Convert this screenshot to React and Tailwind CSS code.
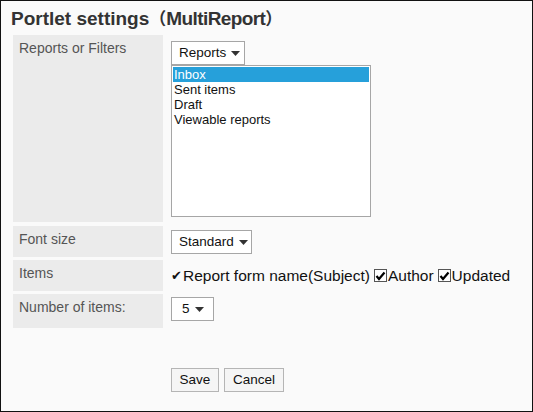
import React from 'react';

const Caret = () => (
    <svg width="9" height="5" viewBox="0 0 9 5" className="ml-[5px] mt-[1px] shrink-0">
        <path d="M0 0 L9 0 L4.5 5 Z" fill="#333" />
    </svg>
);

const SelectBox = ({ label, className = '' }) => (
    <div className={`flex items-center h-[24px] border border-[#a6a6a6] bg-white pl-[7px] pr-[6px] text-[13.5px] text-[#111] ${className}`}>
        <span>{label}</span>
        <Caret />
    </div>
);

const CheckBox = () => (
    <span className="inline-flex items-center justify-center w-[13px] h-[13px] border border-[#555] bg-white mr-[1px]">
        <svg width="11" height="10" viewBox="0 0 11 10">
            <path d="M1.5 5 L4 8 L9.5 1.5" stroke="#000" strokeWidth="2.2" fill="none" />
        </svg>
    </span>
);

const Row = ({ label, children, className = '', valueClass = '' }) => (
    <div className="flex gap-2">
        <div className={`w-[150px] shrink-0 bg-[#ebebeb] px-[6px] pt-[4px] text-[14px] leading-[18px] text-[#555] ${className}`}>{label}</div>
        <div className={`flex-1 ${valueClass}`}>{children}</div>
    </div>
);

export default function App() {
    const options = ['Inbox', 'Sent items', 'Draft', 'Viewable reports'];

    return (
        <div className="w-[533px] h-[412px] border border-[#111] bg-[#fafafa] font-['Liberation_Sans',Arial,sans-serif]">
            <h1 className="pl-[10px] pt-[5px] h-[34px] text-[19px] leading-[24px] font-bold text-[#333]">
                Portlet settings<span className="font-['Noto_Sans_CJK_JP',sans-serif] text-[17px]">（</span><span className="tracking-[-0.6px]">MultiReport</span><span className="font-['Noto_Sans_CJK_JP',sans-serif] text-[17px]">）</span>
            </h1>

            <div className="flex flex-col gap-[3px] pl-[12px]">
                <Row label="Reports or Filters" valueClass="pt-[6px] pb-[6px]" className="h-[187px]">
                    <SelectBox label="Reports" className="w-[74px]" />
                    <div className="w-[200px] h-[152px] border border-[#a6a6a6] bg-white p-[1px] text-[13px] leading-[15px] text-[#111]">
                        {options.map((o, i) => (
                            <div key={o} className={i === 0 ? 'bg-[#26a0da] text-white pl-[1px]' : 'pl-[1px]'}>{o}</div>
                        ))}
                    </div>
                </Row>

                <Row label="Font size" className="h-[31px]" valueClass="pt-[4px]">
                    <SelectBox label="Standard" className="w-[81px]" />
                </Row>

                <Row label="Items" className="h-[31px]" valueClass="flex items-center text-[15.5px] text-[#111]">
                    <span className="text-[13px] mr-[1px] leading-none">✔</span>
                    <span>Report form name(Subject)</span>
                    <span className="ml-[4px] inline-flex items-center"><CheckBox />Author</span>
                    <span className="ml-[4px] inline-flex items-center"><CheckBox />Updated</span>
                </Row>

                <Row label="Number of items:" className="h-[34px]" valueClass="pt-[3px]">
                    <SelectBox label="5" className="w-[43px] pl-[10px]" />
                </Row>
            </div>

            <div className="flex gap-[5px] pl-[170px] pt-[40px]">
                <button className="h-[24px] w-[48px] border border-[#b5b5b5] bg-[#f5f5f5] text-[13.5px] text-[#111]">Save</button>
                <button className="h-[24px] w-[60px] border border-[#b5b5b5] bg-[#f5f5f5] text-[13.5px] text-[#111]">Cancel</button>
            </div>
        </div>
    );
}
